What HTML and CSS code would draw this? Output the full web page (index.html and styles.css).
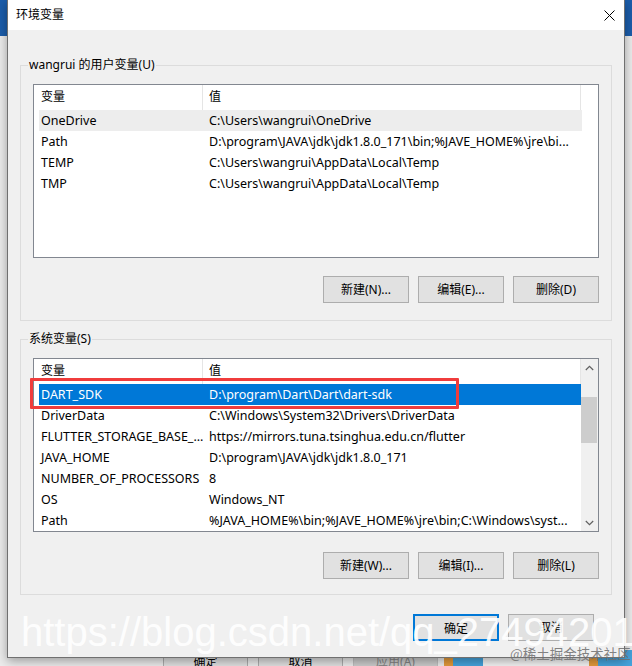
FILE: index.html
```html
<!DOCTYPE html>
<html lang="zh-CN">
<head>
<meta charset="utf-8">
<title>环境变量</title>
<link rel="stylesheet" href="styles.css">
</head>
<body>
<div class="desktop">
  <div class="back-window">
    <div class="back-title"></div>
    <div class="back-buttons">
      <div class="back-btn">确定</div>
      <div class="back-btn">取消</div>
      <div class="back-btn disabled">应用(A)</div>
    </div>
    <div class="back-image"></div>
  </div>

  <div class="dialog">
    <div class="titlebar">
      <span class="title">环境变量</span>
      <svg class="close" width="11" height="11" viewBox="0 0 11 11"><path d="M0.5 0.5 L10.5 10.5 M10.5 0.5 L0.5 10.5" stroke="#000" stroke-width="1" fill="none"/></svg>
    </div>
    <div class="dialog-body">
      <fieldset class="group group-user">
        <legend>wangrui 的用户变量(U)</legend>
        <div class="list">
          <div class="list-main">
            <div class="list-head"><div class="hcell c1">变量</div><div class="hcell c2">值</div></div>
            <div class="rows">
              <div class="row hover"><span class="cell c1">OneDrive</span><span class="cell c2">C:\Users\wangrui\OneDrive</span></div>
              <div class="row"><span class="cell c1">Path</span><span class="cell c2">D:\program\JAVA\jdk\jdk1.8.0_171\bin;%JAVE_HOME%\jre\bi...</span></div>
              <div class="row"><span class="cell c1">TEMP</span><span class="cell c2">C:\Users\wangrui\AppData\Local\Temp</span></div>
              <div class="row"><span class="cell c1">TMP</span><span class="cell c2">C:\Users\wangrui\AppData\Local\Temp</span></div>
            </div>
          </div>
        </div>
        <div class="btns">
          <button class="btn">新建(N)...</button>
          <button class="btn">编辑(E)...</button>
          <button class="btn">删除(D)</button>
        </div>
      </fieldset>

      <fieldset class="group group-sys">
        <legend>系统变量(S)</legend>
        <div class="list">
          <div class="list-main">
            <div class="list-head"><div class="hcell c1">变量</div><div class="hcell c2">值</div></div>
            <div class="rows">
              <div class="row selected"><span class="cell c1">DART_SDK</span><span class="cell c2">D:\program\Dart\Dart\dart-sdk</span></div>
              <div class="row"><span class="cell c1">DriverData</span><span class="cell c2">C:\Windows\System32\Drivers\DriverData</span></div>
              <div class="row"><span class="cell c1">FLUTTER_STORAGE_BASE_...</span><span class="cell c2">https://mirrors.tuna.tsinghua.edu.cn/flutter</span></div>
              <div class="row"><span class="cell c1">JAVA_HOME</span><span class="cell c2">D:\program\JAVA\jdk\jdk1.8.0_171</span></div>
              <div class="row"><span class="cell c1">NUMBER_OF_PROCESSORS</span><span class="cell c2">8</span></div>
              <div class="row"><span class="cell c1">OS</span><span class="cell c2">Windows_NT</span></div>
              <div class="row"><span class="cell c1">Path</span><span class="cell c2">%JAVA_HOME%\bin;%JAVE_HOME%\jre\bin;C:\Windows\syst...</span></div>
            </div>
          </div>
          <div class="scrollbar">
            <div class="sb-btn"><svg width="9" height="6" viewBox="0 0 9 6"><path d="M0.8 5 L4.5 1.3 L8.2 5" stroke="#606060" stroke-width="1.2" fill="none"/></svg></div>
            <div class="sb-track"><div class="sb-thumb"></div></div>
            <div class="sb-btn"><svg width="9" height="6" viewBox="0 0 9 6"><path d="M0.8 1 L4.5 4.7 L8.2 1" stroke="#606060" stroke-width="1.2" fill="none"/></svg></div>
          </div>
          <div class="redbox"></div>
        </div>
        <div class="btns">
          <button class="btn">新建(W)...</button>
          <button class="btn">编辑(I)...</button>
          <button class="btn">删除(L)</button>
        </div>
      </fieldset>

      <div class="footer">
        <button class="btn primary">确定</button>
        <button class="btn">取消</button>
      </div>
    </div>
  </div>

  <div class="watermark">https://blog.csdn.net/qq_27494201</div>
  <div class="juejin">@稀土掘金技术社区</div>
</div>
</body>
</html>
```

FILE: styles.css
```css
* { box-sizing: border-box; }
html, body { margin: 0; padding: 0; }
body {
  width: 632px;
  height: 666px;
  overflow: hidden;
  font-family: "Noto Sans", "Noto Sans CJK SC", sans-serif;
  font-size: 12px;
  color: #000;
  background: #f0f0f0;
}
.desktop { position: relative; width: 632px; height: 666px; overflow: hidden; }

/* background window */
.back-window { position: absolute; inset: 0; background: #ececec; }
.back-title { height: 36px; background: #1b5dab; }
.back-buttons { position: absolute; left: 163px; top: 650px; display: flex; gap: 10px; }
.back-btn {
  width: 85px; height: 24px; border: 1px solid #adadad; background: #e1e1e1;
  text-align: center; line-height: 22px; font-size: 12px;
}
.back-btn.disabled { background: #cccccc; color: #838383; border-color: #bfbfbf; }
.back-image {
  position: absolute; left: 444px; top: 650px; width: 188px; height: 16px;
  background: linear-gradient(90deg, #e49a3a 0 9px, #45a3dc 9px 39px, #f4f4f4 39px 145px, #e49a3a 145px 154px, #45a3dc 154px 188px);
}

/* dialog */
.dialog {
  position: absolute; left: 7px; top: 0; width: 618px; height: 658px;
  background: #f0f0f0; border: 1px solid #707070; border-top: none;
  box-shadow: 0 3px 10px rgba(0,0,0,0.35);
  display: flex; flex-direction: column;
}
.titlebar {
  height: 30px; background: #fff; flex: none;
  display: flex; align-items: center; justify-content: space-between;
  padding: 0 9px 0 8px;
}
.title { font-size: 12px; line-height: 16px; }
.close { display: block; }

.dialog-body { padding: 27px 12px 16px; display: flex; flex-direction: column; }

.group {
  margin: 0; padding: 11px 12px 17px; min-width: 0;
  border: 1px solid #dcdcdc;
}
.group legend { font-size: 12px; line-height: 16px; padding: 0 1px; margin-left: -5px; }
.group-sys { margin-top: 10px; padding-bottom: 15px; }

.list {
  position: relative; height: 174px; border: 1px solid #828790; background: #fff;
  display: flex;
}
.list-main { flex: 1; min-width: 0; }
.list-head { display: flex; height: 25px; }
.hcell { height: 25px; line-height: 24px; border-right: 1px solid #e5e5e5; padding-left: 6px; }
.hcell.c1 { width: 169px; padding-left: 7px; }
.hcell.c2 { width: 378px; }

.rows { padding-left: 5px; }
.row { display: flex; height: 21px; line-height: 21px; width: 543px; white-space: nowrap; font-size: 12.5px; }
.row .c1 { width: 164px; padding-left: 2px; overflow: hidden; flex: none; }
.row .c2 { flex: 1; padding-left: 6px; overflow: hidden; }
.row.hover { background: #ededed; }
.row.selected { background: #0078d7; color: #fff; }

.scrollbar { width: 17px; flex: none; background: #f0f0f0; display: flex; flex-direction: column; }
.sb-btn { height: 17px; display: flex; align-items: center; justify-content: center; flex: none; }
.sb-track { flex: 1; }
.sb-thumb { margin: 21px 1px 0 0; height: 46px; background: #cdcdcd; }

.redbox {
  position: absolute; left: -4px; top: 19px; width: 429px; height: 31px;
  border: 3px solid #f03c3c; border-radius: 1px;
}

.btns { display: flex; justify-content: flex-end; gap: 9px; margin-top: 18px; }
.group-sys .btns { margin-top: 20px; }
.btn {
  width: 86px; height: 27px; padding: 0; margin: 0;
  background: #e1e1e1; border: 1px solid #adadad; border-radius: 0;
  font-family: inherit; font-size: 12px; color: #000; line-height: 25px;
}
.btn.primary { border: 2px solid #0078d7; }

.footer { display: flex; justify-content: flex-end; gap: 9px; margin-top: 19px; padding-right: 18px; }

/* overlays */
.watermark {
  position: absolute; left: 21px; top: 612px;
  font-family: "Liberation Sans", Arial, sans-serif; font-size: 40px; line-height: 1;
  color: rgba(255,255,255,0.93); white-space: nowrap;
}
.juejin {
  position: absolute; left: 510px; top: 645px;
  font-family: "Noto Sans CJK SC", sans-serif; font-size: 13.5px; line-height: 16px;
  color: rgba(110,110,110,0.85); white-space: nowrap;
}
```
